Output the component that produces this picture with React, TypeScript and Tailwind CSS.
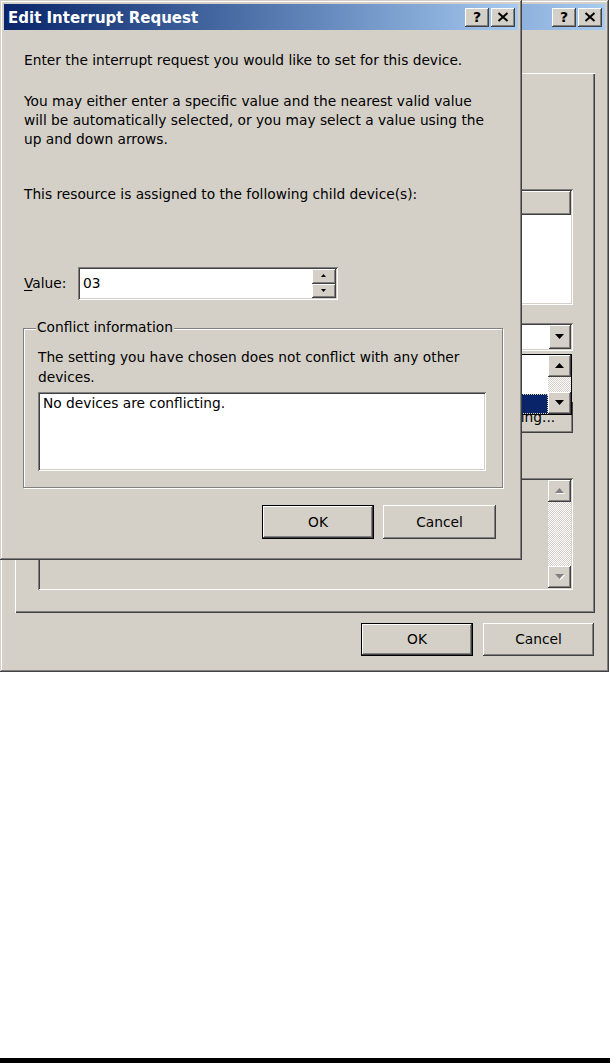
import React from "react";

// Win2000-style bevels
const frame =
  "shadow-[inset_-1px_-1px_0_#404040,inset_1px_1px_0_#d4d0c8,inset_-2px_-2px_0_#808080,inset_2px_2px_0_#ffffff]";
const raised =
  "shadow-[inset_-1px_-1px_0_#404040,inset_1px_1px_0_#ffffff,inset_-2px_-2px_0_#808080,inset_2px_2px_0_#d4d0c8]";
const sunken =
  "shadow-[inset_1px_1px_0_#808080,inset_-1px_-1px_0_#ffffff,inset_2px_2px_0_#404040,inset_-2px_-2px_0_#d4d0c8]";
const etched = "border border-[#808080] shadow-[inset_1px_1px_0_#ffffff,1px_1px_0_#ffffff]";
const page = "shadow-[inset_1px_1px_0_#ffffff,inset_-1px_-1px_0_#404040,inset_-2px_-2px_0_#808080]";
const dither = "bg-[image:repeating-conic-gradient(#d4d0c8_0_25%,#ffffff_0_50%)] bg-[length:2px_2px]";

type Dir = "up" | "down";

const Arrow = ({ dir, w = 9, h = 5, disabled = false }: { dir: Dir; w?: number; h?: number; disabled?: boolean }) => {
  const pts = dir === "up" ? `0,${h} ${w},${h} ${w / 2},0` : `0,0 ${w},0 ${w / 2},${h}`;
  return (
    <svg width={w + 1} height={h + 1} viewBox={`0 0 ${w + 1} ${h + 1}`}>
      {disabled && <polygon points={pts} fill="#ffffff" transform="translate(1,1)" />}
      <polygon points={pts} fill={disabled ? "#808080" : "#000000"} />
    </svg>
  );
};

const CaptionButtons = () => (
  <div className="ml-auto flex gap-[2px] pr-[3px]">
    <div className={`flex h-[19px] w-[24px] items-center justify-center bg-[#d4d0c8] ${raised}`}>
      <span className="text-[14px] font-bold leading-none text-black">?</span>
    </div>
    <div className={`flex h-[19px] w-[24px] items-center justify-center bg-[#d4d0c8] ${raised}`}>
      <svg width="12" height="10" viewBox="0 0 12 10">
        <path d="M1.5 1 L10.5 9 M10.5 1 L1.5 9" stroke="#000" strokeWidth="2" />
      </svg>
    </div>
  </div>
);

const TitleBar = ({ title }: { title?: string }) => (
  <div className="flex h-[26px] shrink-0 items-center bg-linear-to-r from-[#0a246a] to-[#a6caf0] pl-[4px]">
    {title && <span className="mt-[2px] text-[15px] font-bold leading-[19px] text-white">{title}</span>}
    <CaptionButtons />
  </div>
);

const Button = ({ label, primary = false, className = "" }: { label: string; primary?: boolean; className?: string }) => (
  <div
    className={`flex items-center justify-center bg-[#d4d0c8] ${raised} ${primary ? "border border-black" : ""} ${className}`}
  >
    {label}
  </div>
);

const ScrollBar = ({ disabled = false }: { disabled?: boolean }) => (
  <div className="flex w-[23px] flex-col">
    <div className={`flex h-[22px] items-center justify-center bg-[#d4d0c8] ${raised}`}>
      <Arrow dir="up" disabled={disabled} />
    </div>
    <div className={`flex-1 ${dither}`} />
    <div className={`flex h-[22px] items-center justify-center bg-[#d4d0c8] ${raised}`}>
      <Arrow dir="down" disabled={disabled} />
    </div>
  </div>
);

// The parent dialog: only its right strip and bottom show past the modal, so no hidden captions are drawn.
const PropertiesDialog = () => (
  <div className={`absolute left-0 top-0 flex h-[672px] w-[609px] flex-col bg-[#d4d0c8] p-[4px] ${frame}`}>
    <TitleBar />
    <div className="flex flex-1 flex-col pl-[11px] pr-[10px]">
      <div className="mt-[19px] h-[24px]" />
      <div className={`flex h-[540px] flex-col pl-[23px] pr-[22px] ${page}`}>
        <div className="h-[114px]" />
        <div className={`mt-[2px] flex h-[116px] flex-col bg-white p-[2px] ${sunken}`}>
          <div className="flex h-[24px] shrink-0">
            <div className={`w-[180px] bg-[#d4d0c8] ${raised}`} />
            <div className={`flex-1 bg-[#d4d0c8] ${raised}`} />
          </div>
        </div>
        <div className="mt-[18px] flex justify-end">
          <div className={`relative flex h-[28px] w-[353px] bg-white p-[2px] ${sunken}`}>
            <div className="flex-1" />
            <div className={`flex w-[22px] items-center justify-center bg-[#d4d0c8] ${raised}`}>
              <Arrow dir="down" />
            </div>
            <div className="absolute right-[1px] top-[31px] flex h-[61px] w-[352px] border border-black bg-white">
              <div className="flex flex-1 flex-col">
                <div className="h-[39px]" />
                <div className="h-[20px] border border-dotted border-[#d8d0a0] bg-[#0a246a]" />
              </div>
              <ScrollBar />
            </div>
          </div>
        </div>
        <div className="mt-[51px] flex justify-end">
          <Button label="Change Setting..." className="h-[31px] w-[155px]" />
        </div>
        <div className="mt-[22px] h-[19px]" />
        <div className={`mt-[4px] flex h-[112px] bg-[#d4d0c8] p-[2px] ${sunken}`}>
          <div className="flex-1" />
          <ScrollBar disabled />
        </div>
      </div>
      <div className="mt-[10px] flex justify-end gap-[10px] pr-[1px]">
        <Button label="OK" primary className="h-[33px] w-[112px]" />
        <Button label="Cancel" className="h-[33px] w-[111px]" />
      </div>
    </div>
  </div>
);

const EditInterruptDialog = () => (
  <div className={`absolute left-0 top-0 flex h-[560px] w-[522px] flex-col bg-[#d4d0c8] p-[4px] ${frame}`}>
    <TitleBar title="Edit Interrupt Request" />
    <div className="flex flex-col pl-[20px]">
      <p className="mt-[21px]">Enter the interrupt request you would like to set for this device.</p>
      <p className="mt-[22px]">
        You may either enter a specific value and the nearest valid value
        <br />
        will be automatically selected, or you may select a value using the
        <br />
        up and down arrows.
      </p>
      <p className="mt-[36px]">This resource is assigned to the following child device(s):</p>
      <div className="mt-[63px] flex h-[33px] items-center">
        <span className="w-[54px]">
          <span className="underline underline-offset-2">V</span>alue:
        </span>
        <div className={`flex h-[33px] w-[260px] bg-white p-[2px] ${sunken}`}>
          <span className="flex-1 pl-[3px] leading-[29px]">03</span>
          <div className="flex w-[24px] flex-col">
            <div className={`flex flex-1 items-center justify-center bg-[#d4d0c8] ${raised}`}>
              <Arrow dir="up" w={5} h={3} />
            </div>
            <div className={`flex flex-1 items-center justify-center bg-[#d4d0c8] ${raised}`}>
              <Arrow dir="down" w={5} h={3} />
            </div>
          </div>
        </div>
      </div>
      <div className={`-ml-[1px] mt-[28px] flex h-[160px] w-[480px] flex-col ${etched}`}>
        <span className="-mt-[11px] ml-[12px] self-start bg-[#d4d0c8] px-[1px]">Conflict information</span>
        <p className="mt-[10px] pl-[14px] leading-[20px]">
          The setting you have chosen does not conflict with any other
          <br />
          devices.
        </p>
        <div className={`ml-[14px] mt-[5px] h-[79px] w-[448px] bg-white p-[2px] ${sunken}`}>
          <p className="pl-[3px]">No devices are conflicting.</p>
        </div>
      </div>
      <div className="mt-[17px] flex justify-end gap-[9px] pr-[22px]">
        <Button label="OK" primary className="h-[34px] w-[112px]" />
        <Button label="Cancel" className="h-[34px] w-[113px]" />
      </div>
    </div>
  </div>
);

export default function App() {
  return (
    <div className="flex h-[1063px] w-[610px] flex-col overflow-hidden bg-white font-['DejaVu_Sans',sans-serif] text-[13.75px] leading-[19px] text-black">
      <div className="relative h-[672px] shrink-0">
        <PropertiesDialog />
        <EditInterruptDialog />
      </div>
      <div className="flex-1" />
      <div className="h-[5px] shrink-0 bg-black" />
    </div>
  );
}
